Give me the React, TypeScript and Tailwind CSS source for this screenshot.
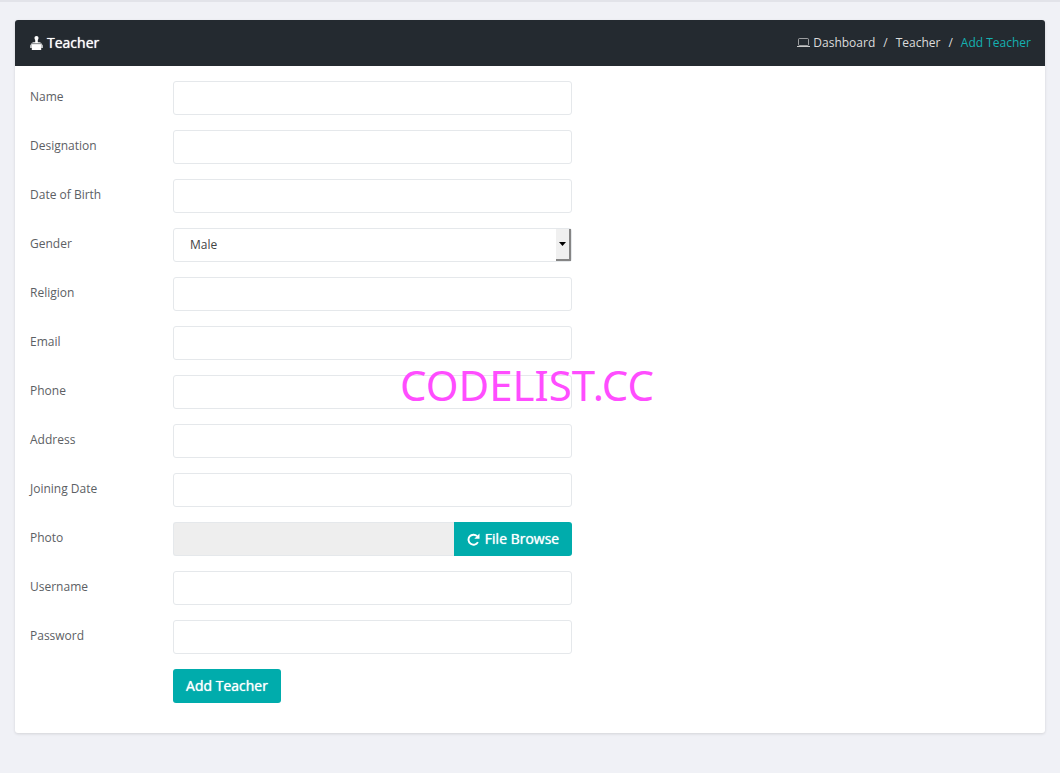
import React from "react";

const control =
  "block h-[34px] w-full rounded-[3px] border border-[#e5e8eb] bg-white px-3 text-xs text-[#444] outline-none focus:border-[#00acac]";

function Row({ label, id, children }: { label: string; id: string; children: React.ReactNode }) {
  return (
    <div className="grid grid-cols-[1fr_3fr_2fr]">
      <label htmlFor={id} className="px-[15px] pt-2 text-xs text-[#5c6064]">
        {label}
      </label>
      <div className="px-[15px]">{children}</div>
    </div>
  );
}

function TextRow({ label, type = "text" }: { label: string; type?: string }) {
  const id = label.toLowerCase().replace(/ /g, "-");
  return (
    <Row label={label} id={id}>
      <input id={id} type={type} className={control} />
    </Row>
  );
}

function TeacherIcon() {
  return (
    <svg aria-hidden="true" width="13" height="15" viewBox="0 0 13 15" fill="currentColor">
      <path d="M6.500 0C7.800 0 8.600.9 8.500 2.300 8.400 3.200 8.100 3.700 7.800 4.100V6.200H9.400C10.600 6.300 11.200 6.800 11.600 7.600H1.400C1.800 6.800 2.400 6.300 3.600 6.200H5.200V4.100C4.900 3.700 4.600 3.200 4.500 2.300 4.400.9 5.200 0 6.500 0Z" />
      <path d="M1.800 8.100H11.200V14H1.800Z" />
      <path d="M1.400 7.500L.2 9.500V12H1.800V7.500ZM11.600 7.500L12.800 9.500V12H11.200V7.500Z" opacity=".85" />
    </svg>
  );
}

function LaptopIcon() {
  return (
    <svg aria-hidden="true" width="13" height="10" viewBox="0 0 13 10" fill="none" stroke="currentColor">
      <rect x="1.500" y=".5" width="10" height="7" rx="1" strokeWidth="1" opacity=".65" />
      <path d="M0 8.500H13" strokeWidth="1" opacity=".9" />
    </svg>
  );
}

function RepeatIcon() {
  return (
    <svg aria-hidden="true" width="13" height="13" viewBox="0 0 13 13">
      <path d="M10.100 3.200A5 5 0 1 0 10.900 9.100" fill="none" stroke="currentColor" strokeWidth="1.900" />
      <path d="M12.500.6V5.800H7.300Z" fill="currentColor" />
    </svg>
  );
}

export default function App() {
  return (
    <main className="relative min-h-screen border-t-2 border-[#e2e3e9] bg-[#f0f1f6] px-[15px] pt-[18px] pb-10 font-['Open_Sans',sans-serif]">
      <section className="rounded-[3px] bg-white shadow-[0_1px_3px_rgba(0,0,0,0.12)]">
        <header className="flex h-[46px] items-center justify-between rounded-t-[3px] bg-[#242a30] pr-[14px] pl-[15px]">
          <h1 className="flex items-center gap-1 text-sm font-medium text-white [text-shadow:0_0_1px_#fff]">
            <TeacherIcon />
            Teacher
          </h1>
          <nav aria-label="Breadcrumb">
            <ol className="flex items-center gap-2 pb-px text-xs text-[#dcdcdc]">
              <li>
                <a href="#dashboard" className="flex items-center gap-[3px]">
                  <LaptopIcon />
                  Dashboard
                </a>
              </li>
              <li aria-hidden="true">/</li>
              <li>
                <a href="#teacher">Teacher</a>
              </li>
              <li aria-hidden="true">/</li>
              <li aria-current="page" className="text-[#14b1b1]">Add Teacher</li>
            </ol>
          </nav>
        </header>
        <div className="pt-[15px] pb-[30px]">
          <form className="flex w-10/12 flex-col gap-[15px]" onSubmit={(e) => e.preventDefault()}>
            <TextRow label="Name" />
            <TextRow label="Designation" />
            <TextRow label="Date of Birth" />
            <Row label="Gender" id="gender">
              <div className="relative">
                <select id="gender" className={`${control} appearance-none pl-4`}>
                  <option>Male</option>
                  <option>Female</option>
                </select>
                <span className="pointer-events-none absolute top-px right-px bottom-px flex w-[15px] items-center justify-center border-r-2 border-b-2 border-[#858585] bg-[#f0f0f0]">
                  <svg aria-hidden="true" width="7" height="4" viewBox="0 0 7 4">
                    <path d="M0 0H7L3.500 4Z" fill="#000" />
                  </svg>
                </span>
              </div>
            </Row>
            <TextRow label="Religion" />
            <TextRow label="Email" type="email" />
            <TextRow label="Phone" type="tel" />
            <TextRow label="Address" />
            <TextRow label="Joining Date" />
            <Row label="Photo" id="photo">
              <div className="flex h-[34px]">
                <input
                  id="photo"
                  type="text"
                  disabled
                  className="min-w-0 flex-1 rounded-l-[3px] border border-r-0 border-[#e5e8eb] bg-[#eee] px-3"
                />
                <button
                  type="button"
                  className="flex items-center gap-[5px] rounded-r-[3px] bg-[#00acac] px-[13px] text-sm font-medium text-white [text-shadow:0_0_1px_#fff]"
                >
                  <RepeatIcon />
                  File Browse
                </button>
              </div>
            </Row>
            <TextRow label="Username" />
            <TextRow label="Password" type="password" />
            <div className="grid grid-cols-[1fr_3fr_2fr]">
              <div className="col-start-2 px-[15px]">
                <button
                  type="submit"
                  className="block h-[34px] rounded-[3px] bg-[#00acac] px-[13px] text-sm font-medium text-white [text-shadow:0_0_1px_#fff]"
                >
                  Add Teacher
                </button>
              </div>
            </div>
          </form>
        </div>
      </section>
      <div className="pointer-events-none absolute top-[353px] left-[400px] font-['Noto_Sans',sans-serif] text-[42px] leading-[60px] text-[#ff4dff]">
        CODELIST.CC
      </div>
    </main>
  );
}
